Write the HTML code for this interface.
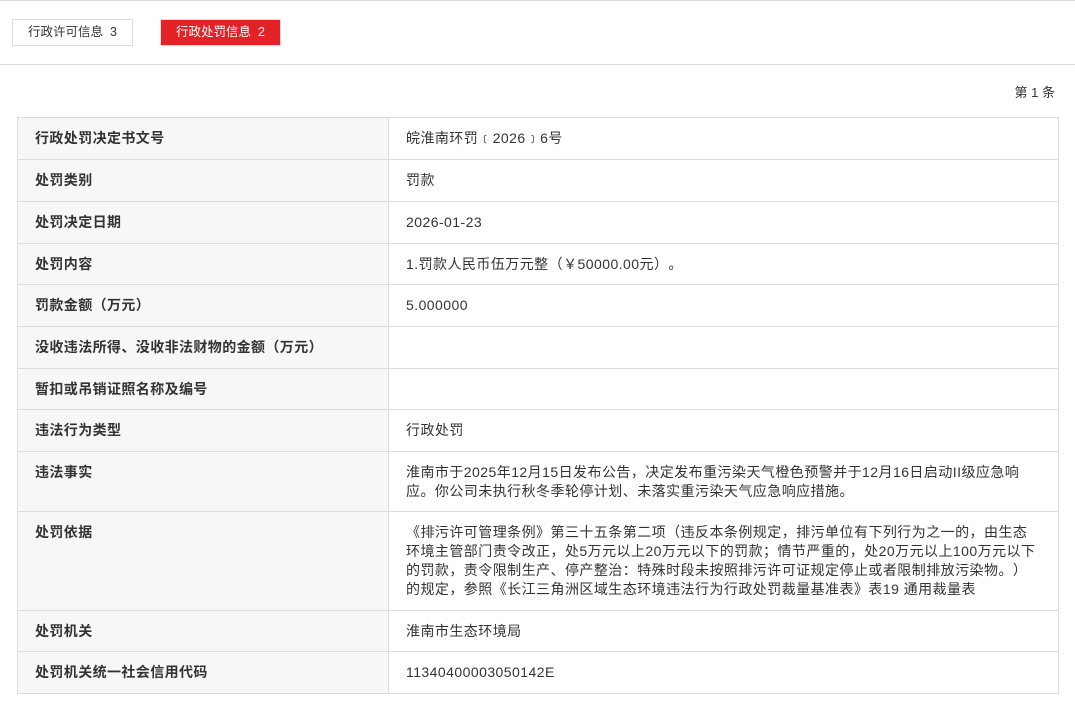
<!DOCTYPE html>
<html><head><meta charset="utf-8"><style>
*{margin:0;padding:0;box-sizing:border-box}
body{width:1075px;height:712px;background:#fff;font-family:"Liberation Sans","Noto Sans CJK SC",sans-serif;font-size:14px;color:#333;position:relative;overflow:hidden;text-spacing-trim:space-all}
.top{position:absolute;top:0;left:0;width:1075px;height:1px;background:#ddd}
.tab{position:absolute;top:19px;height:27px;line-height:25px;border:1px solid #dcdfe6;text-align:center;font-size:12.5px}
.t1{left:12px;width:121px;color:#333;background:#fff}
.t2{left:160px;width:121px;color:#fff;background:#e32126}
.hr{position:absolute;top:64px;left:0;width:1075px;height:1px;background:#ddd}
.cnt{position:absolute;top:84px;right:20px;line-height:18px;font-size:13px}
table{position:absolute;top:117px;left:17px;width:1042px;border-collapse:collapse}
td{border:1px solid #ddd;padding:11px 17px 9px;line-height:19px;vertical-align:top;letter-spacing:0.45px;white-space:nowrap}
td.l{width:371px;background:#f7f7f7;font-weight:bold;letter-spacing:0.4px}
</style></head><body>
<div class="top"></div>
<div class="tab t1">行政许可信息&nbsp;&nbsp;3</div>
<div class="tab t2">行政处罚信息&nbsp;&nbsp;2</div>
<div class="hr"></div>
<div class="cnt">第 1 条</div>
<table>
<tr style="height:42px"><td class="l">行政处罚决定书文号</td><td>皖淮南环罚﹝2026﹞6号</td></tr>
<tr style="height:42px"><td class="l">处罚类别</td><td>罚款</td></tr>
<tr style="height:42px"><td class="l">处罚决定日期</td><td>2026-01-23</td></tr>
<tr style="height:41px"><td class="l">处罚内容</td><td>1.罚款人民币伍万元整（￥50000.00元）。</td></tr>
<tr style="height:42px"><td class="l">罚款金额（万元）</td><td>5.000000</td></tr>
<tr style="height:42px"><td class="l">没收违法所得、没收非法财物的金额（万元）</td><td></td></tr>
<tr style="height:41px"><td class="l">暂扣或吊销证照名称及编号</td><td></td></tr>
<tr style="height:42px"><td class="l">违法行为类型</td><td>行政处罚</td></tr>
<tr style="height:60px"><td class="l">违法事实</td><td>淮南市于2025年12月15日发布公告，决定发布重污染天气橙色预警并于12月16日启动II级应急响<br>应。你公司未执行秋冬季轮停计划、未落实重污染天气应急响应措施。</td></tr>
<tr style="height:99px"><td class="l">处罚依据</td><td>《排污许可管理条例》第三十五条第二项（违反本条例规定，排污单位有下列行为之一的，由生态<br>环境主管部门责令改正，处5万元以上20万元以下的罚款；情节严重的，处20万元以上100万元以下<br>的罚款，责令限制生产、停产整治：特殊时段未按照排污许可证规定停止或者限制排放污染物。）<br>的规定，参照《长江三角洲区域生态环境违法行为行政处罚裁量基准表》表19 通用裁量表</td></tr>
<tr style="height:41px"><td class="l">处罚机关</td><td>淮南市生态环境局</td></tr>
<tr style="height:42px"><td class="l">处罚机关统一社会信用代码</td><td>11340400003050142E</td></tr>
</table>
</body></html>
